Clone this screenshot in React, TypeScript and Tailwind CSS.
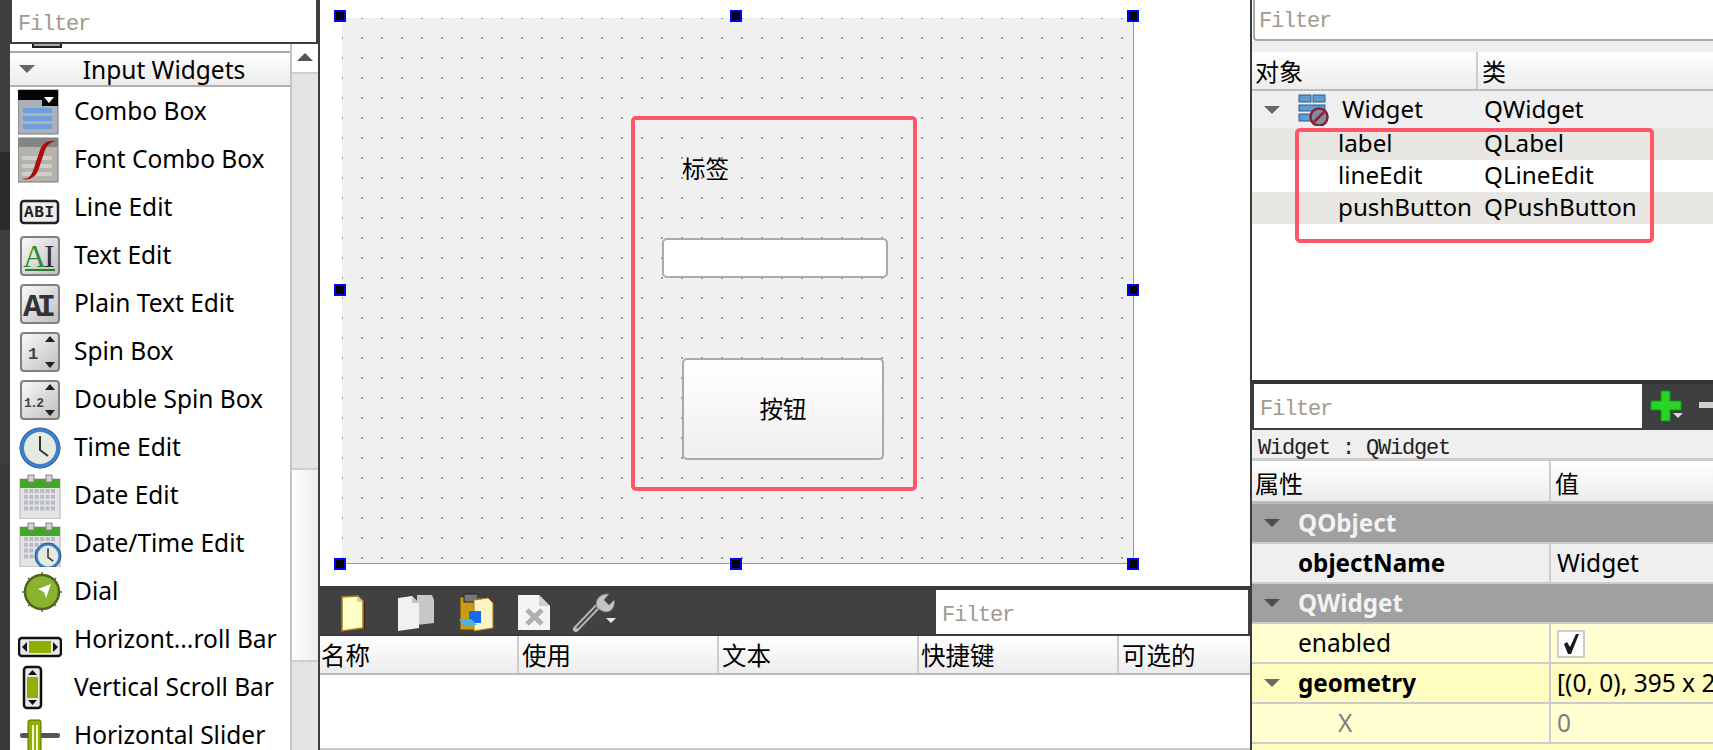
import React from "react";

const UI = "font-['Noto_Sans','Noto_Sans_CJK_SC',sans-serif]";
const MONO = "font-['Liberation_Mono','Noto_Sans_CJK_SC',monospace] text-[22px] tracking-[-1.2px]";
const HEAD = "bg-gradient-to-b from-[#ffffff] to-[#ececec]";
const T = "text-[24.5px] leading-none";
const T2 = "text-[24.2px] leading-none";
const TB = "text-[24.2px] leading-none font-bold";

function Tri({ c = "#666" }: { c?: string }) {
  return (
    <svg width="16" height="8" viewBox="0 0 16 8" className="shrink-0">
      <path d="M0 0H16L8 8Z" fill={c} />
    </svg>
  );
}

function Key({ children }: { children: React.ReactNode }) {
  return (
    <>
      <defs>
        <linearGradient id="keyg" x1="0" y1="0" x2="1" y2="1">
          <stop offset="0" stopColor="#fafafa" />
          <stop offset="1" stopColor="#bdbdbd" />
        </linearGradient>
      </defs>
      <rect x="3" y="6" width="38" height="38" rx="3" fill="url(#keyg)" stroke="#808080" strokeWidth="2" />
      {children}
    </>
  );
}

function Clock({ cx, cy, r }: { cx: number; cy: number; r: number }) {
  return (
    <g>
      <circle cx={cx} cy={cy} r={r} fill="#3f7fc6" stroke="#1f5fa8" />
      <circle cx={cx} cy={cy} r={r * 0.8} fill="#e6ebe2" />
      <path d={`M${cx} ${cy - r * 0.6}V${cy + r * 0.1}L${cx + r * 0.4} ${cy + r * 0.4}`} stroke="#333" strokeWidth={r > 15 ? 2 : 1.5} fill="none" />
    </g>
  );
}

function Calendar({ top, h }: { top: number; h: number }) {
  const cells: React.ReactNode[] = [];
  for (let r = 0; r < 4; r++)
    for (let c = 0; c < 6; c++)
      cells.push(<rect key={`${r}-${c}`} x={6 + c * 5.4} y={top + 14 + r * 5.8} width="4" height="4" fill="#b8bcc4" />);
  return (
    <g>
      <rect x="2" y={top + 4} width="40" height={h - 4} fill="#e4e4e4" stroke="#b0b0b0" />
      <rect x="2" y={top + 4} width="40" height="9" fill="#43a72a" />
      <rect x="10" y={top} width="6" height="7" fill="#d0d0d0" stroke="#888" />
      <rect x="28" y={top} width="6" height="7" fill="#d0d0d0" stroke="#888" />
      {cells}
    </g>
  );
}

const icons: Record<string, React.ReactNode> = {
  "Combo Box": (
    <>
      <rect x="0" y="3" width="40" height="44" fill="#a9b2bb" stroke="#777" />
      <rect x="0" y="3" width="40" height="10" fill="#050505" />
      <rect x="24" y="9" width="16" height="10" fill="#050505" />
      <path d="M26 10H36L31 16Z" fill="#fff" />
      <rect x="5" y="21" width="29" height="5" fill="#6f9fd8" />
      <rect x="5" y="29" width="29" height="5" fill="#6f9fd8" />
      <rect x="5" y="37" width="29" height="5" fill="#6f9fd8" />
    </>
  ),
  "Font Combo Box": (
    <>
      <rect x="0" y="3" width="40" height="44" fill="#b4b4ac" stroke="#777" />
      <rect x="0" y="3" width="40" height="9" fill="#858585" />
      <rect x="4" y="21" width="30" height="4" fill="#cfcfc8" />
      <rect x="4" y="29" width="30" height="4" fill="#cfcfc8" />
      <rect x="4" y="37" width="30" height="4" fill="#cfcfc8" />
      <path d="M2 43C10 46 14 41 17 30L22 15C25 8 30 5 37 6C31 8 28 11 26 18L21 33C18 43 10 47 2 43Z" fill="#a80d0d" />
    </>
  ),
  "Line Edit": (
    <>
      <rect x="3" y="18" width="37" height="22" rx="3" fill="#eee" stroke="#222" strokeWidth="2.5" />
      <text x="6" y="34" fontSize="16" fontFamily="Liberation Mono" fontWeight="700" fill="#222" textLength="30">ABI</text>
    </>
  ),
  "Text Edit": (
    <Key>
      <text x="5" y="36" fontSize="32" fontFamily="Liberation Serif" fill="#2f8a2f">A</text>
      <text x="26" y="36" fontSize="32" fontFamily="Liberation Serif" fill="#333">I</text>
      <rect x="7" y="38" width="30" height="2" fill="#2f7a2f" />
    </Key>
  ),
  "Plain Text Edit": (
    <Key>
      <text x="5" y="37" fontSize="32" fontFamily="Liberation Mono" fontWeight="700" fill="#333" textLength="33">AI</text>
    </Key>
  ),
  "Spin Box": (
    <Key>
      <text x="10" y="32" fontSize="17" fontFamily="Liberation Mono" fontWeight="700" fill="#444">1</text>
      <path d="M27 15H37L32 9Z M27 35H37L32 41Z" fill="#222" />
    </Key>
  ),
  "Double Spin Box": (
    <Key>
      <text x="6" y="32" fontSize="13" fontFamily="Liberation Mono" fontWeight="700" fill="#444" textLength="20">1.2</text>
      <path d="M27 15H37L32 9Z M27 35H37L32 41Z" fill="#222" />
    </Key>
  ),
  "Time Edit": <Clock cx={22} cy={25} r={20} />,
  "Date Edit": <Calendar top={4} h={44} />,
  "Date/Time Edit": (
    <>
      <Calendar top={4} h={44} />
      <Clock cx={30} cy={37} r={13} />
    </>
  ),
  Dial: (
    <>
      <path d="M24 5V45M4 25H44M10 11L38 39M38 11L10 39" stroke="#666" strokeWidth="1.500" />
      <circle cx="24" cy="25" r="17" fill="#8ab32e" stroke="#4e661a" strokeWidth="2.500" />
      <path d="M20 22L33 17L28 31L26 25Z" fill="#fff" />
    </>
  ),
  "Horizont...roll Bar": (
    <>
      <rect x="1" y="23" width="42" height="18" rx="3" fill="#e8e8e8" stroke="#111" strokeWidth="2.5" />
      <rect x="11" y="26" width="22" height="12" fill="#8fb000" />
      <path d="M9 27V37L4 32Z M35 27V37L40 32Z" fill="#111" />
    </>
  ),
  "Vertical Scroll Bar": (
    <>
      <rect x="6" y="4" width="17" height="41" rx="3" fill="#e8e8e8" stroke="#111" strokeWidth="2.5" />
      <rect x="9" y="14" width="11" height="21" fill="#8fb000" />
      <path d="M10 12H19L14.500 7Z M10 37H19L14.500 42Z" fill="#111" />
    </>
  ),
  "Horizontal Slider": (
    <>
      <rect x="2" y="22" width="40" height="5" rx="2" fill="#555" />
      <rect x="10" y="9" width="13" height="39" rx="2" fill="#8fb000" stroke="#556a00" />
      <rect x="14" y="14" width="2" height="26" fill="#f1f6d6" />
      <rect x="18" y="14" width="2" height="26" fill="#f1f6d6" />
    </>
  ),
};

function ListRow({ name }: { name: string }) {
  return (
    <div className="flex h-[48px] shrink-0 items-center">
      <svg width="44" height="48" viewBox="0 0 44 48" className="ml-[8px] shrink-0">
        {icons[name]}
      </svg>
      <span className={`ml-[12px] whitespace-nowrap text-black ${T}`}>{name}</span>
    </div>
  );
}

function Filter({ cls }: { cls: string }) {
  return <div className={`flex items-center bg-white pl-[6px] pt-[7px] ${MONO} text-[#a39a8e] ${cls}`}>Filter</div>;
}

function Left() {
  const names = Object.keys(icons);
  return (
    <div className="flex h-full w-[320px] shrink-0 bg-[#3e3e3e]">
      <div className="flex w-[10px] flex-col">
        <div className="h-[152px] bg-[#3e3e3e]" />
        <div className="h-[78px] bg-[#2a2a2a]" />
        <div className="h-[234px] bg-[#3e3e3e]" />
        <div className="flex-1 bg-[#383838]" />
      </div>
      <div className="flex w-[310px] flex-col">
        <Filter cls="ml-[2px] h-[42px] w-[304px] shrink-0" />
        <div className="mt-[2px] flex min-h-0 flex-1">
          <div className="flex w-[280px] flex-col overflow-hidden bg-white">
            <div className="ml-[22px] h-[4px] w-[30px] shrink-0 border-x-2 border-b-2 border-[#222] bg-[#aaa]" />
            <div className="mt-[3px] h-[2px] shrink-0 bg-[#aaaaaa]" />
            <div className={`relative flex h-[34px] shrink-0 items-center justify-center border-b-2 border-[#b0b0b0] pl-[28px] pt-[2px] ${HEAD}`}>
              <span className="absolute left-[9px] top-[12px]"><Tri /></span>
              <span className={`text-black ${T}`}>Input Widgets</span>
            </div>
            {names.map((n) => (
              <ListRow key={n} name={n} />
            ))}
          </div>
          <div className="flex w-[28px] flex-col border-l-2 border-[#c4c4c4]">
            <div className="flex h-[26px] shrink-0 items-center justify-center bg-white pb-[1px]">
              <svg width="16" height="8" viewBox="0 0 16 8"><path d="M8 0L16 8H0Z" fill="#555" /></svg>
            </div>
            <div className="h-[2px] shrink-0 bg-white" />
            <div className="h-[398px] shrink-0 border-y-2 border-y-[#cfcfcf] bg-[#e4e4e4]" />
            <div className="h-[190px] shrink-0 bg-gradient-to-r from-[#ffffff] to-[#ececec]" />
            <div className="flex-1 border-t-2 border-t-[#cfcfcf] bg-[#e4e4e4]" />
          </div>
        </div>
      </div>
    </div>
  );
}

function Handle({ l, t }: { l: number; t: number }) {
  return (
    <div
      className="absolute h-[12px] w-[12px] border-2 border-[#0000ff] bg-black"
      style={{ left: l, top: t }}
    />
  );
}

function Canvas() {
  const xs = [-8, 388, 785];
  const ys = [-8, 266, 540];
  return (
    <div className="flex-1 pl-[22px] pt-[18px]">
      <div className="relative h-[546px] w-[792px] border-b border-r border-[#999] bg-[#9c9c9c] bg-[linear-gradient(transparent_2px,#f0f0f0_2px),linear-gradient(90deg,transparent_2px,#f0f0f0_2px)] bg-[size:20px_20px] bg-[position:-1px_-1px]">
        {xs.map((x, i) =>
          ys.map((y, j) => (i === 1 && j === 1 ? null : <Handle key={`${i}${j}`} l={x} t={y} />))
        )}
        <span className="absolute left-[340px] top-[140px] text-[23.5px] leading-none text-black">标签</span>
        <div className="absolute left-[320px] top-[220px] h-[40px] w-[226px] rounded-[5px] border-2 border-[#aaaaaa] bg-white" />
        <div className="absolute left-[340px] top-[340px] flex h-[102px] w-[202px] items-center justify-center rounded-[5px] border-2 border-[#aaaaaa] bg-gradient-to-b from-[#ffffff] to-[#efefef] pt-[2px]">
          <span className="text-[23.5px] leading-none text-black">按钮</span>
        </div>
        <div className="absolute left-[289px] top-[98px] h-[375px] w-[286px] rounded-[5px] border-4 border-[#ff5567]" />
      </div>
    </div>
  );
}

function ToolbarIcons() {
  return (
    <div className="flex items-center pl-[20px]">
      <svg width="26" height="40" viewBox="0 0 26 40" className="shrink-0">
        <path d="M4 6L4 40L25 37V10L19 4Z" fill="#3a2c10" />
        <path d="M2 5L18 4L23 9V36L2 39Z" fill="#fffdc8" stroke="#a87c1c" strokeWidth="1.500" />
        <path d="M17 4V10H23Z" fill="#cfcfa8" />
      </svg>
      <svg width="40" height="40" viewBox="0 0 40 40" className="ml-[30px] shrink-0">
        <path d="M21 3H36L38 8V31L21 33Z" fill="#c8c8c8" />
        <path d="M2 6L16 4L23 11V36L2 39Z" fill="#f1f1f1" />
        <path d="M16 4V11H23Z" fill="#c4c4c4" />
      </svg>
      <svg width="38" height="40" viewBox="0 0 38 40" className="ml-[21px] shrink-0">
        <rect x="3" y="5" width="20" height="33" fill="#c79b18" stroke="#5a4208" />
        <rect x="7" y="2" width="14" height="8" fill="#777" stroke="#222" />
        <path d="M17 8L31 6L36 11V36L17 39Z" fill="#fdf3c4" stroke="#a87c1c" />
        <rect x="12" y="19" width="12" height="12" fill="#1968f0" />
        <path d="M2 27H14L20 33H6Z" fill="#45b4e0" />
      </svg>
      <svg width="34" height="40" viewBox="0 0 34 40" className="ml-[22px] shrink-0">
        <path d="M1 3H22L33 14V38H1Z" fill="#f5f5f5" />
        <path d="M22 3V14H33Z" fill="#cfcfcf" />
        <path d="M10 18L25 32M25 18L10 32" stroke="#b0b0b0" strokeWidth="5" />
      </svg>
      <svg width="46" height="42" viewBox="0 0 46 42" className="ml-[22px] shrink-0">
        <path d="M3 38L26 14" stroke="#b8b8b8" strokeWidth="6" strokeLinecap="round" />
        <path d="M4 37L26 14" stroke="#4a4a4c" strokeWidth="2" />
        <path d="M24 17C21 9 27 2 36 3L31 9L36 14L41 9C43 16 37 24 29 20Z" fill="#c4c4c4" stroke="#777" />
        <path d="M33 27H43L38 32Z" fill="#e8e8e8" />
      </svg>
    </div>
  );
}

function HeadCell({ w, t, last, pl }: { w: string; t: string; last?: boolean; pl: string }) {
  return (
    <div className={`flex h-full items-center pt-[4px] ${pl} ${w} ${last ? "flex-1" : "border-r-2 border-[#cccccc]"}`}>
      <span className="text-[24.500px] leading-none text-black">{t}</span>
    </div>
  );
}

function Center() {
  return (
    <div className="flex h-full w-[930px] shrink-0 flex-col bg-white">
      <Canvas />
      <div className="flex h-[50px] shrink-0 items-center justify-between border-t-[4px] border-b-[2px] border-[#3a3a3c] bg-[#414143] pr-[2px]">
        <ToolbarIcons />
        <Filter cls="h-[44px] w-[312px]" />
      </div>
      <div className={`flex h-[39px] shrink-0 border-b-2 border-[#bbbbbb] ${HEAD}`}>
        <HeadCell w="w-[199px]" t="名称" pl="pl-[1px]" />
        <HeadCell w="w-[200px]" t="使用" pl="pl-[3px]" />
        <HeadCell w="w-[200px]" t="文本" pl="pl-[3px]" />
        <HeadCell w="w-[200px]" t="快捷键" pl="pl-[2px]" />
        <HeadCell w="" t="可选的" pl="pl-[3px]" last />
      </div>
      <div className="h-[73px] shrink-0 bg-white" />
      <div className="h-[2px] shrink-0 bg-[#c8c8c8]" />
    </div>
  );
}

function TreeRow({ a, b, bg }: { a: string; b: string; bg: string }) {
  return (
    <div className={`flex h-[32px] shrink-0 items-center pb-[1px] ${bg}`}>
      <span className={`ml-[86px] w-[146px] text-black ${T2}`}>{a}</span>
      <span className={`text-black ${T2}`}>{b}</span>
    </div>
  );
}

function ObjectPanel() {
  return (
    <div className="relative flex h-[380px] shrink-0 flex-col bg-white">
      <div className={`ml-[1px] flex h-[41px] shrink-0 items-center rounded-bl-[4px] border-b-2 border-l-2 border-[#aaaaaa] bg-white pl-[4px] pt-[3px] ${MONO} text-[#a39a8e]`}>Filter</div>
      <div className="h-[11px] shrink-0 bg-[#efefef]" />
      <div className={`flex h-[39px] shrink-0 border-b-2 border-[#bbbbbb] ${HEAD}`}>
        <div className="flex w-[226px] items-center border-r-2 border-[#cccccc] pl-[3px] pt-[3px]">
          <span className="text-[24px] leading-none text-black">对象</span>
        </div>
        <div className="flex items-center pl-[4px] pt-[3px]">
          <span className="text-[24px] leading-none text-black">类</span>
        </div>
      </div>
      <div className="flex h-[37px] shrink-0 items-center bg-[#efefef]">
        <span className="ml-[12px]"><Tri /></span>
        <svg width="32" height="32" viewBox="0 0 32 32" className="ml-[18px] shrink-0">
          <rect x="1" y="1" width="12" height="7" fill="#5f9bd4" stroke="#2c5c8c" />
          <rect x="15" y="1" width="12" height="7" fill="#5f9bd4" stroke="#2c5c8c" />
          <rect x="1" y="11" width="26" height="6" fill="#5f9bd4" stroke="#2c5c8c" />
          <rect x="1" y="20" width="26" height="7" fill="#5f9bd4" stroke="#2c5c8c" />
          <circle cx="21" cy="23" r="8.500" fill="#7d8fa0" stroke="#8a2038" strokeWidth="2.500" />
          <path d="M16 28L26 18" stroke="#8a2038" strokeWidth="2.500" />
        </svg>
        <span className={`ml-[12px] -mt-[1px] w-[142px] text-black ${T2}`}>Widget</span>
        <span className={`-mt-[1px] text-black ${T2}`}>QWidget</span>
      </div>
      <TreeRow a="label" b="QLabel" bg="bg-[#e8e6e2]" />
      <TreeRow a="lineEdit" b="QLineEdit" bg="bg-white" />
      <TreeRow a="pushButton" b="QPushButton" bg="bg-[#e8e6e2]" />
      <div className="absolute left-[43px] top-[128px] h-[115px] w-[359px] rounded-[5px] border-4 border-[#ff5567]" />
    </div>
  );
}

function PropRow({
  bg,
  name,
  bold,
  muted,
  ind = 46,
  tri,
  value,
}: {
  bg: string;
  name: string;
  bold?: boolean;
  muted?: boolean;
  ind?: number;
  tri?: boolean;
  value?: React.ReactNode;
}) {
  return (
    <div className={`flex h-[40px] shrink-0 border-b-2 border-[#cccccc] ${bg}`}>
      <div className="relative flex w-[299px] shrink-0 items-center border-r-2 border-[#cccccc]">
        {tri && <span className="absolute left-[12px] top-[15px]"><Tri c="#6a6a58" /></span>}
        <span
          className={`whitespace-nowrap ${bold ? TB : T} ${muted ? "text-[#808080]" : "text-black"}`}
          style={{ marginLeft: ind }}
        >
          {name}
        </span>
      </div>
      <div className="flex min-w-0 flex-1 items-center overflow-hidden pl-[6px]">{value}</div>
    </div>
  );
}

function GroupRow({ name }: { name: string }) {
  return (
    <div className="flex h-[40px] shrink-0 items-center border-b-2 border-[#cccccc] bg-[#a0a0a0]">
      <span className="ml-[12px]"><Tri c="#4c4c4c" /></span>
      <span className={`ml-[18px] mt-[1px] text-[#f2f2f2] ${TB}`}>{name}</span>
    </div>
  );
}

function PropertyPanel() {
  const val = `whitespace-nowrap ${T}`;
  return (
    <div className="flex min-h-0 flex-1 flex-col bg-[#3e3e40]">
      <div className="flex h-[50px] shrink-0 items-start border-t-4 border-[#333335] pl-[2px]">
        <Filter cls="h-[44px] w-[388px] shrink-0" />
        <svg width="34" height="34" viewBox="0 0 34 34" className="ml-[8px] mt-[6px] shrink-0">
          <path d="M11 1H20V11H31V20H20V31H11V20H1V11H11Z" fill="#28d428" stroke="#0d9a0d" />
          <path d="M23 23H33L28 28Z" fill="#d8d8d8" />
        </svg>
        <div className="ml-[15px] mt-[18px] h-[6px] w-[20px] shrink-0 bg-[#cfcfcf]" />
      </div>
      <div className={`flex h-[31px] shrink-0 items-center border-b-[3px] border-[#cccccc] bg-[#efefef] pl-[6px] pt-[8px] ${MONO} text-[#222]`}>
        <span className="whitespace-pre">Widget : QWidget</span>
      </div>
      <div className={`flex h-[43px] shrink-0 border-b-[3px] border-[#bdbdbd] ${HEAD}`}>
        <div className="flex w-[299px] shrink-0 items-center border-r-2 border-[#cccccc] pl-[3px] pt-[5px]">
          <span className="text-[24px] leading-none text-black">属性</span>
        </div>
        <div className="flex items-center pl-[4px] pt-[5px]">
          <span className="text-[24px] leading-none text-black">值</span>
        </div>
      </div>
      <GroupRow name="QObject" />
      <PropRow bg="bg-[#efefef]" name="objectName" bold value={<span className={val}>Widget</span>} />
      <GroupRow name="QWidget" />
      <PropRow
        bg="bg-[#ffffd2]"
        name="enabled"
        value={
          <div className="mt-[2px] flex h-[28px] w-[28px] items-center justify-center border-2 border-[#cccccc] bg-white">
            <svg width="18" height="22" viewBox="0 0 18 22">
              <path d="M2 11L5 9L8 14L14 1H17L9 21H6Z" fill="#1a1a1a" />
            </svg>
          </div>
        }
      />
      <PropRow bg="bg-[#fffcc0]" name="geometry" bold tri value={<span className={val}>[(0, 0), 395 x 272]</span>} />
      <PropRow bg="bg-[#ffffd2]" name="X" muted ind={86} value={<span className={`${val} text-[#808080]`}>0</span>} />
      <div className="flex-1 bg-[#fffcc0]" />
    </div>
  );
}

export default function App() {
  return (
    <div className={`flex h-[750px] w-[1713px] overflow-hidden bg-white ${UI}`}>
      <Left />
      <Center />
      <div className="flex h-full min-w-0 flex-1 flex-col border-l-2 border-[#3a3a3a] bg-white">
        <ObjectPanel />
        <PropertyPanel />
      </div>
    </div>
  );
}
